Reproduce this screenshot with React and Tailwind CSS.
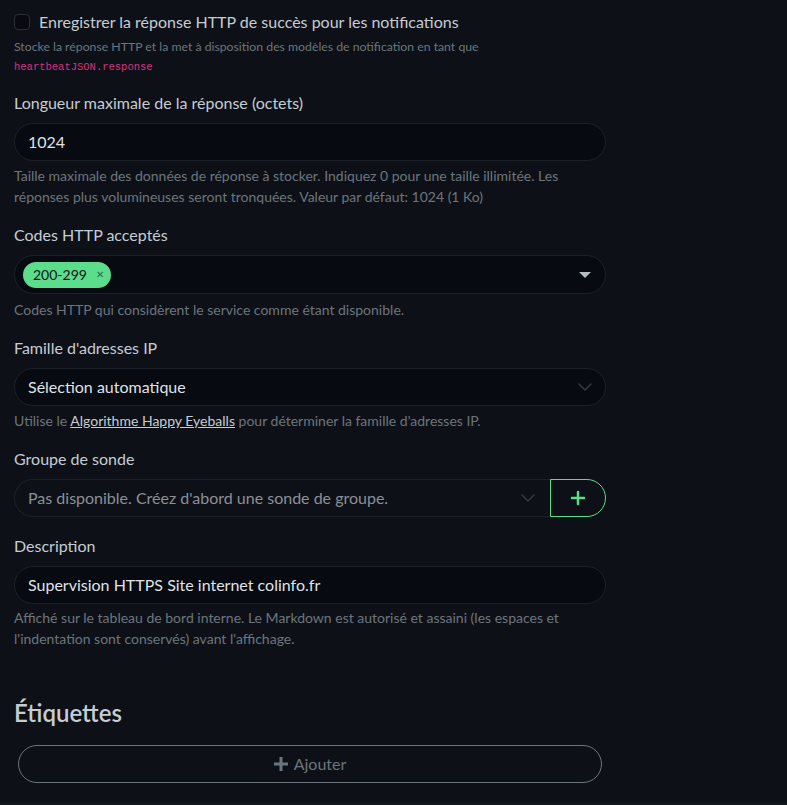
import React from 'react';

const font = { fontFamily: 'Lato, "Noto Sans", sans-serif' };

function Help({ children, className = 'mt-[4px]' }) {
  return <div className={`text-[14px] leading-[21px] text-[#6c757d] ${className}`}>{children}</div>;
}

function Label({ children }) {
  return <div className="text-[16px] leading-[24px] text-[#c6ccd4] mb-[8px]">{children}</div>;
}

function Chevron() {
  return (
    <svg width="16" height="16" viewBox="0 0 16 16" fill="none" stroke="#343a40" strokeWidth="1.5" strokeLinecap="round" strokeLinejoin="round">
      <path d="M2 5l6 6 6-6" />
    </svg>
  );
}

export default function App() {
  return (
    <div className="min-h-[805px] w-[787px] bg-[#0d1117] flex flex-col" style={font}>
      <div className="px-[14px] pt-[11px] w-[620px]">
        <label className="flex items-center gap-[9px]">
          <span className="w-[16px] h-[16px] rounded-[4px] border border-[#2b3038] bg-[#070a10]" />
          <span className="text-[16px] leading-[22px] text-[#c6ccd4]">Enregistrer la réponse HTTP de succès pour les notifications</span>
        </label>
        <div className="text-[12.25px] leading-[19px] text-[#6c757d] mt-[4px]">
          Stocke la réponse HTTP et la met à disposition des modèles de notification en tant que
          <br />
          <code className="text-[#d63384] text-[10.5px] font-['Liberation_Mono']">heartbeatJSON.response</code>
        </div>

        <div className="mt-[14px]">
          <Label>Longueur maximale de la réponse (octets)</Label>
          <div className="h-[38px] rounded-full border border-[#1c2128] bg-[#070a10] flex items-center px-[13px] text-[16px] text-[#dfe3e8]">1024</div>
          <Help>Taille maximale des données de réponse à stocker. Indiquez 0 pour une taille illimitée. Les réponses plus volumineuses seront tronquées. Valeur par défaut: 1024 (1 Ko)</Help>
        </div>

        <div className="mt-[16px]">
          <Label>Codes HTTP acceptés</Label>
          <div className="h-[39px] rounded-full border border-[#1c2128] bg-[#070a10] flex items-center pl-[8px] pr-[14px]">
            <span className="h-[26px] rounded-full bg-[#5cdd8b] flex items-center pl-[10px] pr-[7px] gap-[9px] text-[14px] text-[#0d1117]">
              200-299
              <span className="text-[10px] text-[#2c6b43]">✕</span>
            </span>
            <span className="ml-auto w-0 h-0 border-l-[6px] border-r-[6px] border-t-[6px] border-l-transparent border-r-transparent border-t-[#b6bcc4]" />
          </div>
          <Help className="mt-[5px]">Codes HTTP qui considèrent le service comme étant disponible.</Help>
        </div>

        <div className="mt-[16px]">
          <Label>Famille d'adresses IP</Label>
          <div className="h-[38px] rounded-full border border-[#1c2128] bg-[#070a10] flex items-center pl-[13px] pr-[12px] text-[16px] text-[#dfe3e8]">
            Sélection automatique
            <span className="ml-auto"><Chevron /></span>
          </div>
          <Help>
            Utilise le <a className="underline text-[#c6ccd4]">Algorithme Happy Eyeballs</a> pour déterminer la famille d'adresses IP.
          </Help>
        </div>

        <div className="mt-[16px]">
          <Label>Groupe de sonde</Label>
          <div className="flex h-[38px]">
            <div className="flex-1 rounded-l-full border border-r-0 border-[#1c2128] bg-[#0d1117] flex items-center pl-[13px] pr-[14px] text-[16px] text-[#8a9096]">
              Pas disponible. Créez d'abord une sonde de groupe.
              <span className="ml-auto"><Chevron /></span>
            </div>
            <button className="w-[56px] rounded-r-full border border-[#5cdd8b] flex items-center justify-center">
              <svg width="16" height="16" viewBox="0 0 16 16" stroke="#5cdd8b" strokeWidth="2.5" strokeLinecap="round">
                <path d="M8 2v12M2 8h12" />
              </svg>
            </button>
          </div>
        </div>

        <div className="mt-[17px]">
          <Label>Description</Label>
          <div className="h-[38px] rounded-full border border-[#1c2128] bg-[#070a10] flex items-center px-[13px] text-[16px] text-[#dfe3e8]">Supervision HTTPS Site internet colinfo.fr</div>
          <Help className="mt-[3px]">Affiché sur le tableau de bord interne. Le Markdown est autorisé et assaini (les espaces et l'indentation sont conservés) avant l'affichage.</Help>
        </div>

        <h2 className="mt-[49px] text-[24px] leading-[30px] font-semibold text-[#c6ccd4]">Étiquettes</h2>
        <div className="px-[4px] mt-[17px]">
          <button className="w-full h-[38px] rounded-full border border-[#6c757d] flex items-center justify-center gap-[6px] text-[16px] text-[#6c757d]">
            <svg width="14" height="14" viewBox="0 0 14 14" stroke="#6c757d" strokeWidth="3">
              <path d="M7 0v14M0 7h14" />
            </svg>
            Ajouter
          </button>
        </div>
      </div>
      <div className="mt-auto h-[3px] bg-[#12161d]" />
    </div>
  );
}
